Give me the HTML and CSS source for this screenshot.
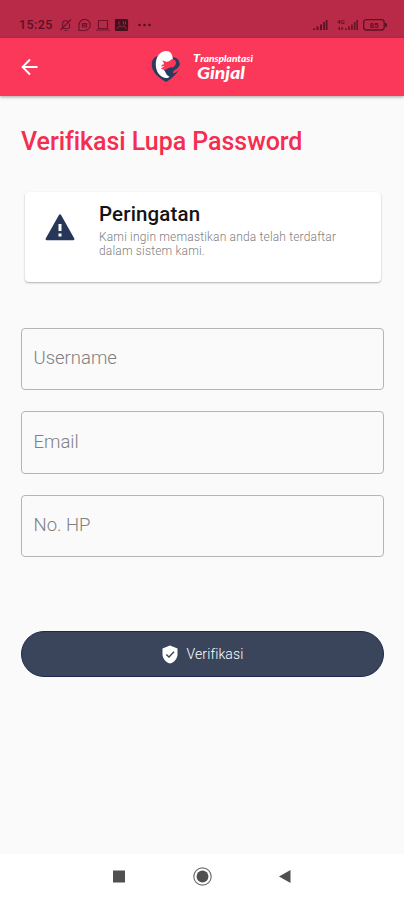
FILE: index.html
```html
<!DOCTYPE html>
<html lang="id">
<head>
  <meta charset="UTF-8">
  <meta name="viewport" content="width=device-width, initial-scale=1.0">
  <title>Verifikasi Lupa Password</title>
  <link rel="stylesheet" href="styles.css">
</head>
<body>
  <div class="status-bar">
    <span class="clock">15:25</span>
    <svg class="status-left" width="96" height="14" viewBox="0 0 96 14" fill="none" stroke="#6e142b" stroke-width="1.2">
      <!-- muted bell -->
      <path d="M2 10.5h8.500M3.500 10V6a3.300 3.300 0 0 1 6-2M10.500 5.500V10M5.500 12.500h3M1.500 12L12 1.500"/>
      <!-- chat -->
      <path d="M20 12.500h5.500a5.600 5.600 0 1 0-5.500-5.500z"/>
      <path d="M23.500 5.500h4v3.500h-4zM23.500 7.200h4"/>
      <!-- laptop -->
      <path d="M39.500 2.500h9v8h-9zM37 12h14"/>
      <!-- picture -->
      <rect x="56.500" y="1.500" width="12" height="11" rx="1" fill="#43101d" stroke="#43101d"/>
      <path d="M58 11l3-3.500 2 2 2-2 2.500 3.500M60 3.500v3M64.500 3.500v3M66.500 3.500v3" stroke="#a82640" stroke-width="1"/>
      <g fill="#43101d" stroke="none">
        <circle cx="80.500" cy="7" r="1.200"/>
        <circle cx="85.500" cy="7" r="1.200"/>
        <circle cx="90.500" cy="7" r="1.200"/>
      </g>
    </svg>
    <svg class="status-right" width="76" height="14" viewBox="0 0 76 14" fill="#5c1226">
      <path d="M1 10.500h2V12H1zM4.500 8.500h2V12h-2zM8 6.500h2V12H8zM11.200 4h1.800v8h-1.800zM13.800 2h1.700v10h-1.700z"/>
      <path d="M33 10.500h1.800V12H33zM36 8.500h1.800V12H36zM39 6.500h1.800V12H39zM41.800 4h1.700v8h-1.700zM44.300 2H46v10h-1.700z" opacity=".85"/>
      <text x="25" y="5.500" class="net-label">4G</text>
      <path d="M26 10.500l2-2v4zM29.500 8.500v4l2-2z"/>
      <rect x="51.700" y="1.700" width="20.500" height="10.300" rx="2.800" fill="none" stroke="#5c1226" stroke-width="1.300"/>
      <rect x="73" y="5" width="2" height="4" rx="1"/>
      <text x="62" y="9.700" text-anchor="middle" class="battery-label">85</text>
    </svg>
  </div>

  <header class="app-bar">
    <svg class="back" width="18" height="18" viewBox="0 0 18 18" fill="none" stroke="#fff" stroke-width="1.900">
      <path d="M16.500 9H2M9 1.500L1.600 9 9 16.500"/>
    </svg>
    <svg class="logo" width="106" height="36" viewBox="0 0 106 36">
      <!-- shield with kidney -->
      <path d="M7 7C2 8 0 13 1 18c1.500 6 6 10.500 14 15 8-5 12-9 13.500-15.500.8-3-.2-6-2.500-8L20 7z" fill="#293b5e"/>
      <path d="M21 22c4-1 6.500-3.500 8.500-7 .5 4-3 8-7 9.500z" fill="#fb3859"/>
      <path d="M15.500 2C9 2 4.500 8 4.800 16c.2 7 4.200 12 9.700 13 1.800.3 3.200-.2 4-1.200-3-1.600-4.700-4-4.200-7 .5-2.600 6.700-4.200 7.400-8.500C22.500 6.500 20 2 15.500 2z" fill="#fff"/>
      <path d="M11 11.500c2 .2 3 1 4.500 1.200 2 .2 3.200-.8 4.500-2.200 2.500-1 5 .5 5 3 0 3.500-3 5-6 6.300-2 .8-3 1.500-5.500 1.700-1-1-2-1.500-3.500-1.500 .5-1.500 2-2 3.500-2.500-1.200-.5-2.500-.5-3.500 0 .6-1.500 1.800-2 3-2.200-.3-1.800-.8-3-2-3.800z" fill="#fb3859"/>
      <path d="M13 21.500l7-3.500 4 2.500-4 4.500-4-1z" fill="#293b5e"/>
      <text x="42" y="13" textLength="60" lengthAdjust="spacingAndGlyphs" class="logo-top"><tspan class="logo-cap">T</tspan>ransplantasi</text>
      <text x="46" y="29.500" textLength="48" lengthAdjust="spacingAndGlyphs" class="logo-main">Ginjal</text>
    </svg>
  </header>

  <main class="content">
    <h1>Verifikasi Lupa Password</h1>

    <section class="card">
      <svg class="warning" width="30" height="27" viewBox="0 0 30 27">
        <path d="M15 1.500L28.200 25H1.800z" fill="#27375a" stroke="#27375a" stroke-width="2.500" stroke-linejoin="round"/>
        <path d="M13.500 10h3v7h-3zM13.500 19.500h3v3h-3z" fill="#fff"/>
      </svg>
      <div class="card-text">
        <h2>Peringatan</h2>
        <p>Kami ingin memastikan anda telah terdaftar<br>dalam sistem kami.</p>
      </div>
    </section>

    <form class="form">
      <input type="text" class="field" placeholder="Username">
      <input type="text" class="field" placeholder="Email">
      <input type="text" class="field" placeholder="No. HP">
      <button type="button" class="btn">
        <svg width="16" height="19" viewBox="0 0 16 19">
          <path d="M8 .500L15.500 3.500v5.700c0 4.300-3.200 8-7.500 9.300C3.700 17.200.500 13.500.500 9.200V3.500z" fill="#fff"/>
          <path d="M4.300 9.500l2.700 2.600 5-5.300" fill="none" stroke="#38435a" stroke-width="1.400"/>
        </svg>
        <span>Verifikasi</span>
      </button>
    </form>
  </main>

  <nav class="nav-bar">
    <svg width="20" height="20" viewBox="0 0 20 20">
      <rect x="4" y="3.500" width="12" height="12" fill="#505050"/>
    </svg>
    <svg width="20" height="20" viewBox="0 0 20 20">
      <circle cx="10.500" cy="9.500" r="8.700" fill="none" stroke="#707070" stroke-width="1.200"/>
      <circle cx="10.500" cy="9.500" r="5.900" fill="#505050"/>
    </svg>
    <svg width="20" height="20" viewBox="0 0 20 20">
      <path d="M4 9.500L15.500 3v13z" fill="#505050"/>
    </svg>
  </nav>
</body>
</html>
```
FILE: styles.css
```css
* {
  box-sizing: border-box;
}
body {
  margin: 0;
  height: 900px;
  display: flex;
  flex-direction: column;
  overflow: hidden;
  font-family: Roboto, "Liberation Sans", sans-serif;
  background: #fafafa;
}
.status-bar {
  height: 38px;
  padding: 11px 16px 0 19px;
  display: flex;
  align-items: center;
  background: #b82a47;
  color: #5c1026;
}
.clock {
  width: 40px;
  font-size: 12.5px;
  font-weight: 500;
  letter-spacing: 0.4px;
}
.status-right {
  margin-left: auto;
}
.net-label {
  font-size: 6px;
  font-weight: 700;
}
.battery-label {
  font-size: 8px;
  font-weight: 700;
}
.app-bar {
  position: relative;
  height: 58px;
  padding: 0 21px;
  display: flex;
  align-items: center;
  background: #fb3859;
  box-shadow: 0 1px 3px rgba(0,0,0,0.35);
}
.logo {
  margin-left: 112px;
  margin-top: -1px;
}
.logo-top, .logo-main {
  font-family: Lato, "Open Sans", sans-serif;
  font-style: italic;
  font-weight: 900;
  fill: #fff;
}
.logo-top {
  font-size: 9.5px;
}
.logo-cap {
  font-size: 12px;
}
.logo-main {
  font-size: 17.5px;
}
.content {
  flex: 1;
  padding: 30px 20px 0 21px;
}
h1 {
  margin: 0;
  font-size: 25px;
  line-height: 32px;
  font-weight: 500;
  letter-spacing: -0.05px;
  color: #f62c50;
}
.card {
  height: 90px;
  margin: 34px 3px 0 4px;
  padding: 9px 20px;
  display: flex;
  background: #fff;
  border-radius: 4px;
  box-shadow: 0 1px 2px rgba(0,0,0,0.3);
}
.warning {
  margin-top: 13px;
}
.card-text {
  margin-left: 24px;
  white-space: nowrap;
}
h2 {
  margin: 0;
  font-size: 20.5px;
  line-height: 26px;
  font-weight: 500;
  letter-spacing: 0.15px;
  color: #141414;
}
.card p {
  margin: 3px 0 0;
  font-size: 12px;
  line-height: 14px;
  font-weight: 300;
  letter-spacing: 0.17px;
  color: #808080;
}
.form {
  margin-top: 45.5px;
  display: flex;
  flex-direction: column;
  gap: 21px;
}
.field {
  width: 363px;
  height: 62.5px;
  padding: 0 12px 1px 11.5px;
  border: 1px solid #b4b4b4;
  border-radius: 4px;
  background: transparent;
  font-family: inherit;
  font-size: 18.5px;
  font-weight: 300;
  outline: none;
}
.field::placeholder {
  color: #808080;
}
.btn {
  width: 363px;
  height: 46px;
  margin-top: 53px;
  padding: 0;
  display: flex;
  align-items: center;
  justify-content: center;
  gap: 9px;
  border: 1px solid #1c2850;
  border-radius: 23px;
  background: #3a445b;
  color: #fff;
  font-family: inherit;
  font-size: 14px;
  font-weight: 300;
  letter-spacing: 0.1px;
}
.nav-bar {
  height: 46px;
  padding: 0 109px;
  display: flex;
  align-items: center;
  justify-content: space-between;
  background: #fff;
}
```
